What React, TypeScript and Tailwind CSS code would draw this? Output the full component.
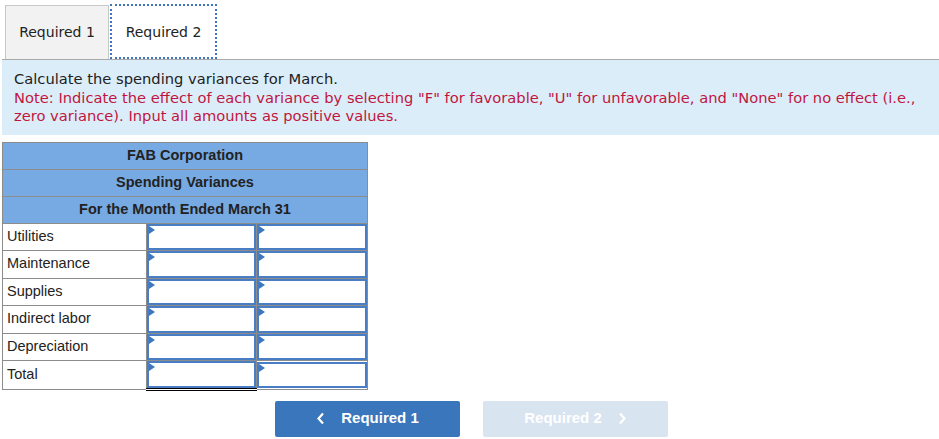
export default function App() {
  const rows = [
    "Utilities",
    "Maintenance",
    "Supplies",
    "Indirect labor",
    "Depreciation",
    "Total",
  ];

  const InputBox = () => (
    <div className="relative h-[26.5px] w-full">
      <div className="h-full w-full border-2 border-[#4a7ec4] bg-white" />
      <div className="absolute left-[2px] top-[2px] h-0 w-0 border-y-[4px] border-l-[6px] border-y-transparent border-l-[#3d77c0]" />
    </div>
  );

  return (
    <div className="min-h-screen w-[939px] bg-white font-['DejaVu_Sans',sans-serif] text-[#222]">
      {/* tabs */}
      <div className="flex items-end pl-[5px] pt-[4px]">
        <div className="flex h-[54px] w-[104px] items-center justify-center border border-b-0 border-[#c8c8c8] bg-[#f2f2f2] text-[14px] text-[#222]">
          Required 1
        </div>
        <div className="ml-[1px] flex h-[55px] w-[107px] items-center justify-center border-2 border-dotted border-[#3f73c0] bg-white pt-[2px] text-[14px] text-[#222]">
          Required 2
        </div>
      </div>
      <div className="ml-[2px] h-[1px] bg-[#a9a9a9]" />

      {/* instructions */}
      <div className="ml-[2px] bg-[#dcedfa] px-[12px] pb-[9px] pt-[10px] text-[14.7px] leading-[18.5px]">
        <p className="text-[#222]">Calculate the spending variances for March.</p>
        <p className="text-[#c0163e]">
          Note: Indicate the effect of each variance by selecting "F" for favorable, "U" for
          unfavorable, and "None" for no effect (i.e., zero variance). Input all amounts as
          positive values.
        </p>
      </div>

      {/* table */}
      <div className="ml-[2px] mt-[7px] font-['Liberation_Sans',Arial,sans-serif]">
        <table className="w-[365px] table-fixed border-collapse border border-[#8c8c8c] text-[14.5px]">
          <colgroup>
            <col className="w-[144px]" />
            <col className="w-[110px]" />
            <col className="w-[111px]" />
          </colgroup>
          <tbody>
            {["FAB Corporation", "Spending Variances", "For the Month Ended March 31"].map((h) => (
              <tr key={h}>
                <td
                  colSpan={3}
                  className="h-[27px] border border-[#8c8c8c] bg-[#77aae2] p-0 text-center font-bold text-[#222]"
                >
                  {h}
                </td>
              </tr>
            ))}
            {rows.map((r) => {
              const total = r === "Total";
              return (
                <tr key={r}>
                  <td className="border border-[#8c8c8c] px-[4px] py-0 text-[#222]">{r}</td>
                  <td
                    className={`border border-[#8c8c8c] p-0 ${
                      r === "Depreciation" ? "border-b-black" : ""
                    } ${total ? "border-b-[3px] border-double border-b-black" : ""}`}
                  >
                    <InputBox />
                  </td>
                  <td className="border border-[#8c8c8c] p-0">
                    <InputBox />
                  </td>
                </tr>
              );
            })}
          </tbody>
        </table>
      </div>

      {/* nav buttons */}
      <div className="mt-[10px] flex gap-[23px] pl-[275px] font-['Liberation_Sans',Arial,sans-serif]">
        <button className="flex h-[36px] w-[185px] items-center justify-center gap-[16px] rounded-[2px] bg-[#3a76bc] text-[15px] font-bold text-white">
          <svg width="9" height="13" viewBox="0 0 9 13">
            <path d="M7 1.5 L2.5 6.5 L7 11.5" fill="none" stroke="white" strokeWidth="2.2" />
          </svg>
          Required 1
        </button>
        <button className="flex h-[36px] w-[185px] items-center justify-center gap-[16px] rounded-[2px] bg-[#d9e4f1] text-[15px] font-bold text-white">
          Required 2
          <svg width="9" height="13" viewBox="0 0 9 13">
            <path d="M2 1.5 L6.5 6.5 L2 11.5" fill="none" stroke="white" strokeWidth="2.2" />
          </svg>
        </button>
      </div>
    </div>
  );
}
